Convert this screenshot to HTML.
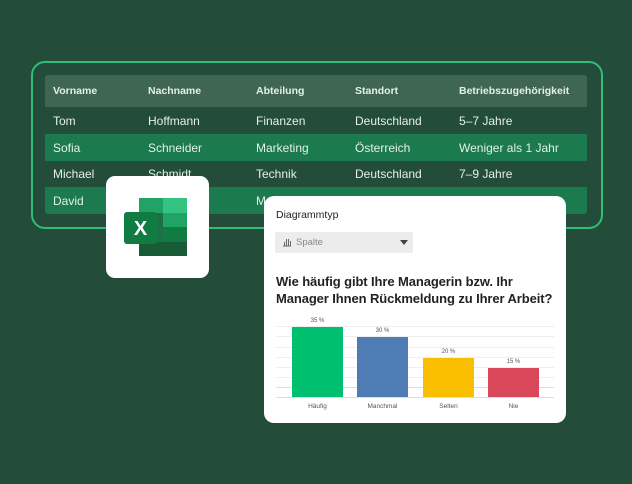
<!DOCTYPE html>
<html><head><style>
body{margin:0;width:632px;height:484px;background:#234c3a;font-family:"Liberation Sans",sans-serif;position:relative;overflow:hidden}
.abs{position:absolute}
.outer{left:31px;top:61px;width:568px;height:164px;border:2px solid #2fbf72;border-radius:14px}
.row{position:absolute;left:45px;width:542px;height:26.5px;color:#e6efe9;font-size:12px}
.row span{position:absolute;top:7px}
.hd{background:#3f6653;font-weight:bold;font-size:10.5px;height:32px;border-radius:3px 3px 0 0}
.hd span{top:10px}
.hl{background:#1b7a4e}
.c1{left:8px}.c2{left:103px}.c3{left:211px}.c4{left:310px}.c5{left:414px}
.card{left:264px;top:196px;width:302px;height:227px;background:#fff;border-radius:10px}
.bar{position:absolute;width:51px}
.lab{position:absolute;font-size:6px;color:#555;text-align:center;width:51px}
.grid{position:absolute;left:276px;width:278px;height:1px;background:#eee}
</style></head><body>
<div class="abs outer"></div>
<div class="row hd" style="top:75px"><span class="c1">Vorname</span><span class="c2">Nachname</span><span class="c3">Abteilung</span><span class="c4">Standort</span><span class="c5">Betriebszugehörigkeit</span></div>
<div class="row" style="top:107px"><span class="c1">Tom</span><span class="c2">Hoffmann</span><span class="c3">Finanzen</span><span class="c4">Deutschland</span><span class="c5">5–7 Jahre</span></div>
<div class="row hl" style="top:134px"><span class="c1">Sofia</span><span class="c2">Schneider</span><span class="c3">Marketing</span><span class="c4">Österreich</span><span class="c5">Weniger als 1 Jahr</span></div>
<div class="row" style="top:160px"><span class="c1">Michael</span><span class="c2">Schmidt</span><span class="c3">Technik</span><span class="c4">Deutschland</span><span class="c5">7–9 Jahre</span></div>
<div class="row hl" style="top:187px;border-radius:0 0 3px 3px"><span class="c1">David</span><span class="c3">Marketing</span></div>

<div class="abs" style="left:106px;top:176px;width:103px;height:102px;background:#fff;border-radius:9px"></div>
<svg class="abs" style="left:124px;top:198px" width="64" height="60" viewBox="0 0 64 60">
<rect x="15" y="0" width="48" height="58" rx="3" fill="#1c7044"/>
<rect x="39" y="0" width="24" height="15" fill="#33c481"/>
<rect x="15" y="0" width="24" height="15" fill="#21a366"/>
<rect x="39" y="15" width="24" height="14" fill="#21a366"/>
<rect x="39" y="29" width="24" height="15" fill="#107c41"/>
<rect x="15" y="44" width="48" height="14" fill="#185c37"/>
<rect x="0" y="14" width="33" height="32" rx="3" fill="#107c41"/>
<text x="16.5" y="37" font-size="20" font-weight="bold" fill="#fff" text-anchor="middle" font-family="Liberation Sans">X</text>
</svg>

<div class="abs card"></div>
<div class="abs" style="left:276px;top:209px;font-size:10.5px;color:#222">Diagrammtyp</div>
<div class="abs" style="left:275px;top:232px;width:138px;height:21px;background:#ececec;border-radius:2px"></div>
<svg class="abs" style="left:282px;top:237px" width="10" height="10"><path d="M1 9h8M2.5 9V5M4.5 9V2M6.5 9V2M8.5 9V4" stroke="#666" stroke-width="1" fill="none"/></svg>
<div class="abs" style="left:296px;top:237px;font-size:9.5px;color:#888">Spalte</div>
<div class="abs" style="left:400px;top:240px;width:0;height:0;border-left:4px solid transparent;border-right:4px solid transparent;border-top:5px solid #444"></div>
<div class="abs" style="left:276px;top:273px;font-size:13px;font-weight:bold;color:#222;line-height:17px;letter-spacing:-0.1px">Wie häufig gibt Ihre Managerin bzw. Ihr<br>Manager Ihnen Rückmeldung zu Ihrer Arbeit?</div>
<div class="grid" style="top:326px"></div><div class="grid" style="top:336px"></div><div class="grid" style="top:347px"></div><div class="grid" style="top:357px"></div><div class="grid" style="top:367px"></div><div class="grid" style="top:377px"></div><div class="grid" style="top:387px;background:#ddd"></div><div class="grid" style="top:397px;background:#ddd"></div>
<div class="bar" style="left:292px;top:327px;height:70px;background:#00bf6f"></div>
<div class="bar" style="left:357px;top:337px;height:60px;background:#507cb6"></div>
<div class="bar" style="left:423px;top:358px;height:39px;background:#f9be00"></div>
<div class="bar" style="left:488px;top:368px;height:29px;background:#d9475b"></div>
<div class="lab" style="left:292px;top:318px">35 %</div>
<div class="lab" style="left:357px;top:328px">30 %</div>
<div class="lab" style="left:423px;top:349px">20 %</div>
<div class="lab" style="left:488px;top:359px">15 %</div>
<div class="lab" style="left:292px;top:403px;font-size:6.5px">Häufig</div>
<div class="lab" style="left:357px;top:403px;font-size:6.5px">Manchmal</div>
<div class="lab" style="left:423px;top:403px;font-size:6.5px">Selten</div>
<div class="lab" style="left:488px;top:403px;font-size:6.5px">Nie</div>
</body></html>
